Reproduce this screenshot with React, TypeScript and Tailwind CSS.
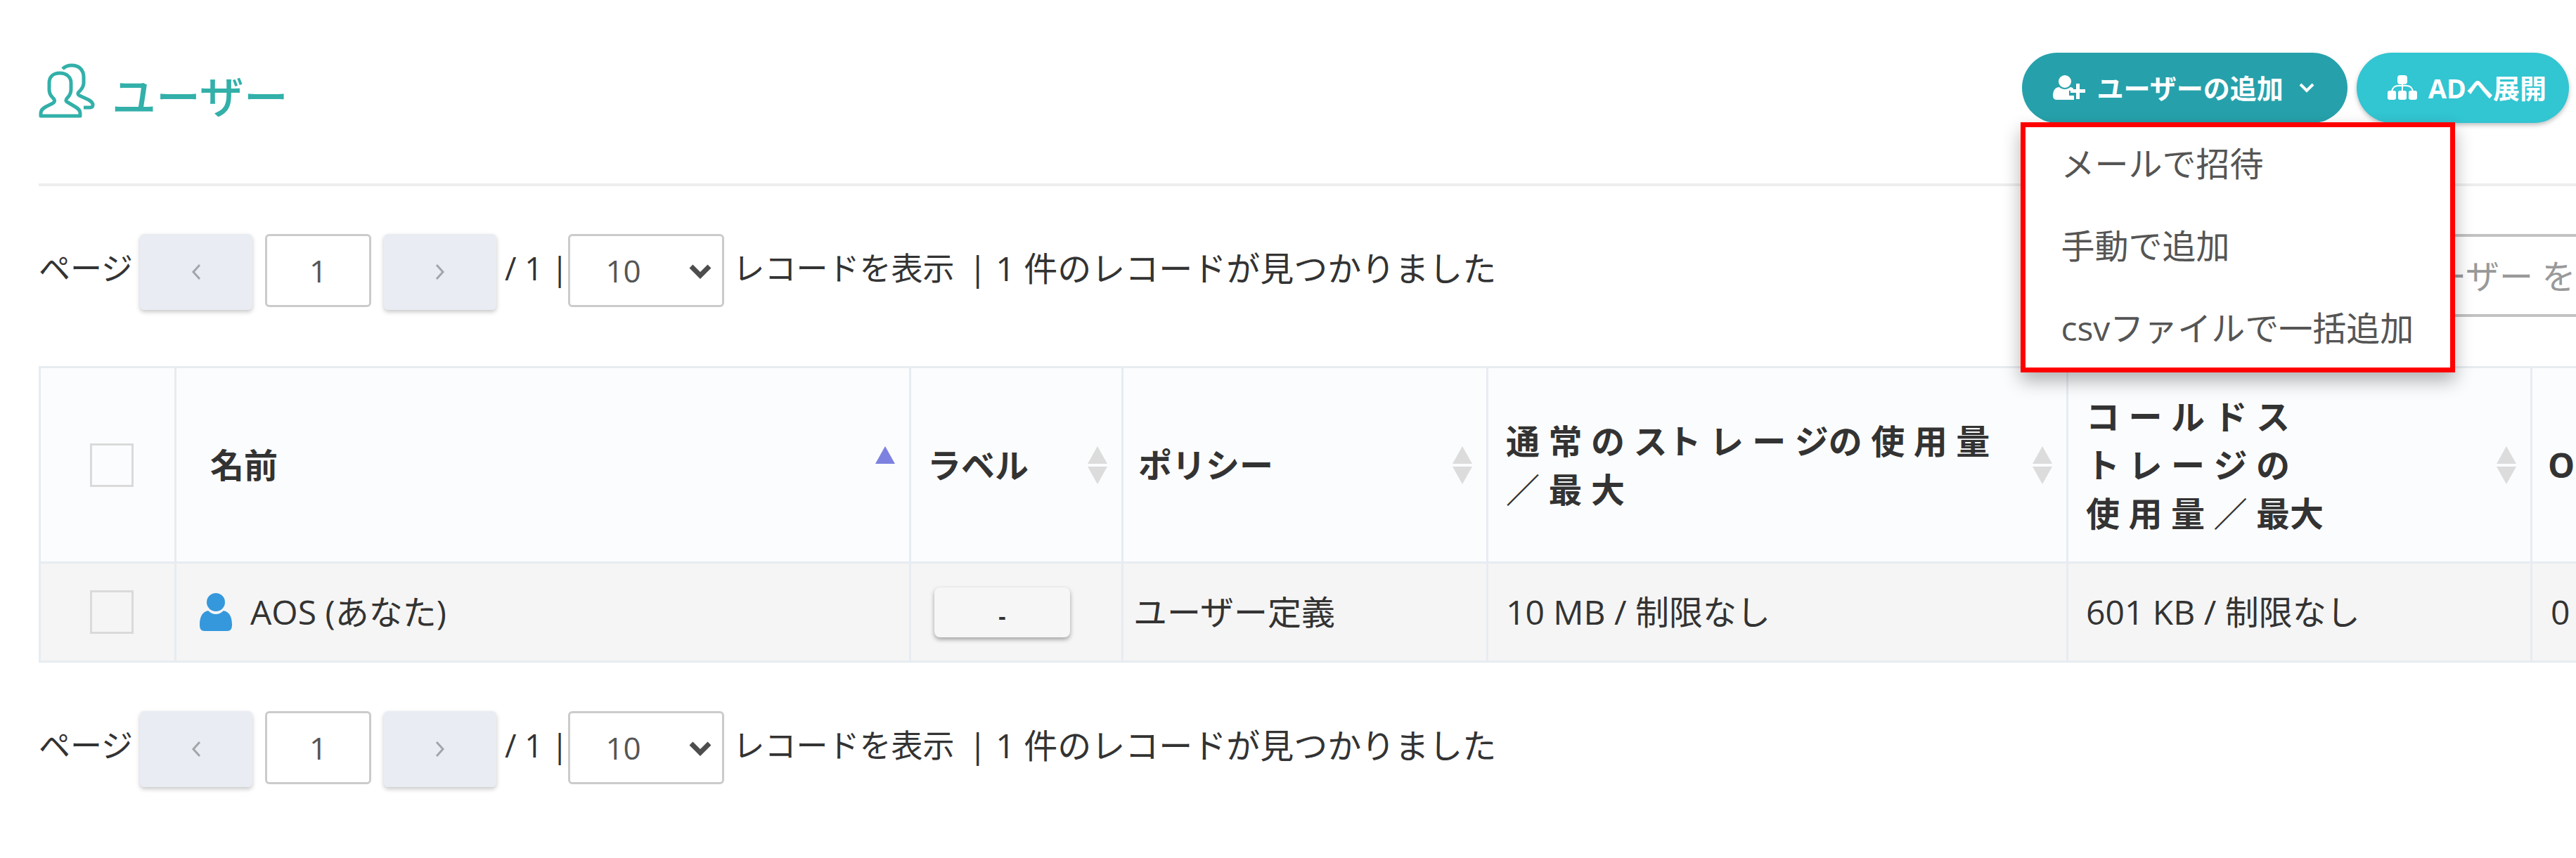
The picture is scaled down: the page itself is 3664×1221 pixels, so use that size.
import clsx from 'clsx';

const MENU_ITEMS = ['メールで招待', '手動で追加', 'csvファイルで一括追加'];

const COLUMNS = [
  { lines: ['ラベル'], width: 'w-[302px]', padding: 'pl-[23px]' },
  { lines: ['ポリシー'], width: 'w-[519px]', padding: 'pl-[21px]' },
  {
    lines: ['通 常 の スト レ ー ジの 使 用 量', '／ 最 大'],
    width: 'w-[825px]',
    padding: 'pl-[25px]',
  },
  {
    lines: ['コ ー ル ド ス', 'ト レ ー ジ の', '使 用 量 ／ 最大'],
    width: 'w-[660px]',
    padding: 'pl-[25px]',
  },
];

function UsersIcon() {
  return (
    <svg
      viewBox="0 0 80 80"
      className="size-20 fill-none stroke-[#32b0a9]"
      strokeWidth="5"
      strokeLinejoin="round"
      aria-hidden="true"
    >
      <path d="M30 14C20 14 15 20 15 28v10c0 5 2 8 5 11 4 4 3 6 0 8l-10 5C5 65 3 67 3 71v4h56v-4c0-4-2-6-7-9l-10-6c-4-2-4-4-1-7 4-4 5-7 5-12V28c0-8-6-14-16-14Z" />
      <path d="M34 8c3-3 8-5 13-5 10 0 17 6 17 17v8c0 5-2 8-6 12-3 2-3 4 0 6l13 6c5 3 6 5 6 7 0 3-1 4-4 4h-9" />
    </svg>
  );
}

function UserPlusIcon() {
  return (
    <svg viewBox="0 0 46 36" className="mr-4 h-9 w-[46px] fill-white" aria-hidden="true">
      <ellipse cx="17" cy="9" rx="9" ry="9" />
      <path d="M9 17c2 2 5 3 8 3s5-1 8-3c2 0 3 1 4 2v3h-6v7h7v6H6c-4 0-6-2-6-6 0-7 3-12 9-12Z" />
      <path d="M33 12h5v8h8v5h-8v9h-5v-9h-8v-5h8Z" />
    </svg>
  );
}

function SitemapIcon() {
  return (
    <svg viewBox="0 0 42 36" className="h-9 w-[42px] fill-white" aria-hidden="true">
      <rect x="14" y="0" width="14" height="13" rx="4" />
      <rect x="0" y="22" width="12" height="13" rx="3" />
      <rect x="15" y="22" width="12" height="13" rx="3" />
      <rect x="30" y="22" width="12" height="13" rx="3" />
      <path d="M21 12v11M6 23c1-5 4-8 9-8h12c5 0 8 3 9 8" className="fill-none stroke-white" strokeWidth="2" />
    </svg>
  );
}

function SortIcon({ active = false }: { active?: boolean }) {
  return (
    <svg viewBox="0 0 28 54" className="h-[54px] w-7 shrink-0" aria-hidden="true">
      <path d="M14 0 28 25H0Z" className={active ? 'fill-[#7d81e0]' : 'fill-[#dcdcdc]'} />
      {!active && <path d="M0 29H28L14 54Z" className="fill-[#dcdcdc]" />}
    </svg>
  );
}

function Checkbox({ label }: { label: string }) {
  return (
    <input
      type="checkbox"
      aria-label={label}
      className="mx-auto block size-[62px] appearance-none border-3 border-[#dadada]"
    />
  );
}

function PagerButton({ direction }: { direction: 'prev' | 'next' }) {
  return (
    <button
      aria-label={direction}
      className="flex h-[108px] w-40 items-center justify-center rounded-md bg-[#e9ecf3] shadow-[0_3px_6px_rgba(0,0,0,0.22)]"
    >
      <svg viewBox="0 0 14 22" className="h-[22px] w-3.5 fill-none stroke-[#a3a5a9]" strokeWidth="3">
        <path d={direction === 'prev' ? 'M12 1 3 11l9 10' : 'M2 1l9 10-9 10'} />
      </svg>
    </button>
  );
}

function Pager() {
  return (
    <div className="flex items-start text-[45px] leading-[98px] text-[#333]">
      <span className="mr-2.5">ページ</span>
      <PagerButton direction="prev" />
      <input
        aria-label="page"
        defaultValue="1"
        className="mx-[18px] h-[104px] w-[151px] rounded-md border-3 border-[#cbcbcb] text-center text-[44px] text-[#555]"
      />
      <PagerButton direction="next" />
      <span className="ml-3">/ 1 |</span>
      <div className="relative">
        <select
          aria-label="page size"
          className="h-[104px] w-[222px] appearance-none rounded-md border-3 border-[#cbcbcb] bg-white pl-[50px] text-[44px] text-[#555]"
        >
          <option>10</option>
        </select>
        <svg
          viewBox="0 0 32 22"
          className="pointer-events-none absolute top-[43px] right-[18px] h-[22px] w-8 fill-none stroke-[#4d4d4d]"
          strokeWidth="7"
        >
          <path d="M3 3l13 13L29 3" />
        </svg>
      </div>
      <span className="ml-3">レコードを表示</span>
      <span className="ml-5 text-[48px]">| 1 件のレコードが見つかりました</span>
    </div>
  );
}

export default function App() {
  return (
    <main
      className="overflow-hidden bg-white pt-[75px] pb-[102px] pl-[55px] text-[48px] text-[#333]"
      style={{ fontFamily: '"Open Sans", "Noto Sans CJK JP", sans-serif' }}
    >
      <header className="flex h-[190px] items-start justify-between border-b-4 border-[#eee] pr-2.5">
        <div className="flex items-start gap-6 pt-[15px]">
          <UsersIcon />
          <h1 className="text-[63px] leading-[94px] font-medium text-[#32b0a9]">ユーザー</h1>
        </div>
        <div className="flex gap-[13px] text-[38px] font-bold text-white">
          <div className="relative">
            <button className="flex h-[100px] items-center rounded-full bg-[#26a1ab] pr-[47px] pl-11">
              <UserPlusIcon />
              ユーザーの追加
              <svg
                viewBox="0 0 22 14"
                className="ml-[22px] h-3.5 w-[22px] fill-none stroke-white"
                strokeWidth="4"
                aria-hidden="true"
              >
                <path d="M2 2l9 9 9-9" />
              </svg>
            </button>
            <ul className="absolute top-[99px] -left-0.5 flex w-[618px] flex-col gap-[45px] border-7 border-[#f00] bg-white pt-4 pb-5 pl-[50px] text-[48px] leading-[72px] font-normal text-[#555] shadow-[0_12px_24px_rgba(0,0,0,0.3)]">
              {MENU_ITEMS.map((item) => (
                <li key={item}>
                  <a href="#">{item}</a>
                </li>
              ))}
            </ul>
          </div>
          <button className="flex h-[100px] items-center gap-4 rounded-full bg-[#32c5d2] pr-8 pl-11 shadow-[0_3px_6px_rgba(0,0,0,0.25)]">
            <SitemapIcon />
            ADへ展開
          </button>
        </div>
      </header>

      <div className="mt-[68px] flex justify-between">
        <Pager />
        <input
          type="text"
          aria-label="ユーザー"
          placeholder="ユーザー を"
          className="h-[118px] w-[320px] border-4 border-r-0 border-[#c2c2c2] pl-16 placeholder:text-[#999]"
        />
      </div>

      <table className="mt-[70px] w-full table-fixed border-collapse border-3 border-r-0 border-[#e7ecf1] text-left [&_td]:border-3 [&_td]:border-[#e7ecf1] [&_th]:border-3 [&_th]:border-[#e7ecf1]">
        <thead className="bg-[#fbfcfd] leading-[69px]">
          <tr className="h-[278px]">
            <th className="w-[193px] pl-3">
              <Checkbox label="すべて選択" />
            </th>
            <th className="w-[1045px] pr-5 pl-12">
              <div className="flex items-center justify-between">
                名前
                <SortIcon active />
              </div>
            </th>
            {COLUMNS.map((column) => (
              <th key={column.lines[0]} className={clsx('pr-5', column.width, column.padding)}>
                <div className="flex items-center justify-between">
                  <span>
                    {column.lines.map((line) => (
                      <span key={line} className="block whitespace-nowrap">
                        {line}
                      </span>
                    ))}
                  </span>
                  <SortIcon />
                </div>
              </th>
            ))}
            <th className="border-r-0! pl-[22px]">O</th>
          </tr>
        </thead>
        <tbody className="bg-[#f5f5f5]">
          <tr className="h-[141px]">
            <td className="pl-3">
              <Checkbox label="AOS" />
            </td>
            <td className="pl-[33px]">
              <div className="flex items-center gap-[26px]">
                <svg viewBox="0 0 46 54" className="h-[54px] w-[46px] fill-[#3598dc]" aria-hidden="true">
                  <ellipse cx="23" cy="13" rx="13" ry="13" />
                  <path d="M12 25c3 3 7 5 11 5s8-2 11-5c9 2 12 10 12 20 0 6-2 9-7 9H7c-5 0-7-3-7-9 0-10 3-18 12-20Z" />
                </svg>
                AOS (あなた)
              </div>
            </td>
            <td className="pl-[33px]">
              <button className="block h-[71px] w-[193px] rounded-lg bg-[#f6f6f6] pt-3 text-[32px] font-bold shadow-[0_3px_6px_rgba(0,0,0,0.35)]">
                -
              </button>
            </td>
            <td className="pl-3.5">ユーザー定義</td>
            <td className="pl-[25px]">10 MB / 制限なし</td>
            <td className="pl-[25px]">601 KB / 制限なし</td>
            <td className="border-r-0! pl-[26px]">0</td>
          </tr>
        </tbody>
      </table>

      <div className="mt-[69px]">
        <Pager />
      </div>
    </main>
  );
}
